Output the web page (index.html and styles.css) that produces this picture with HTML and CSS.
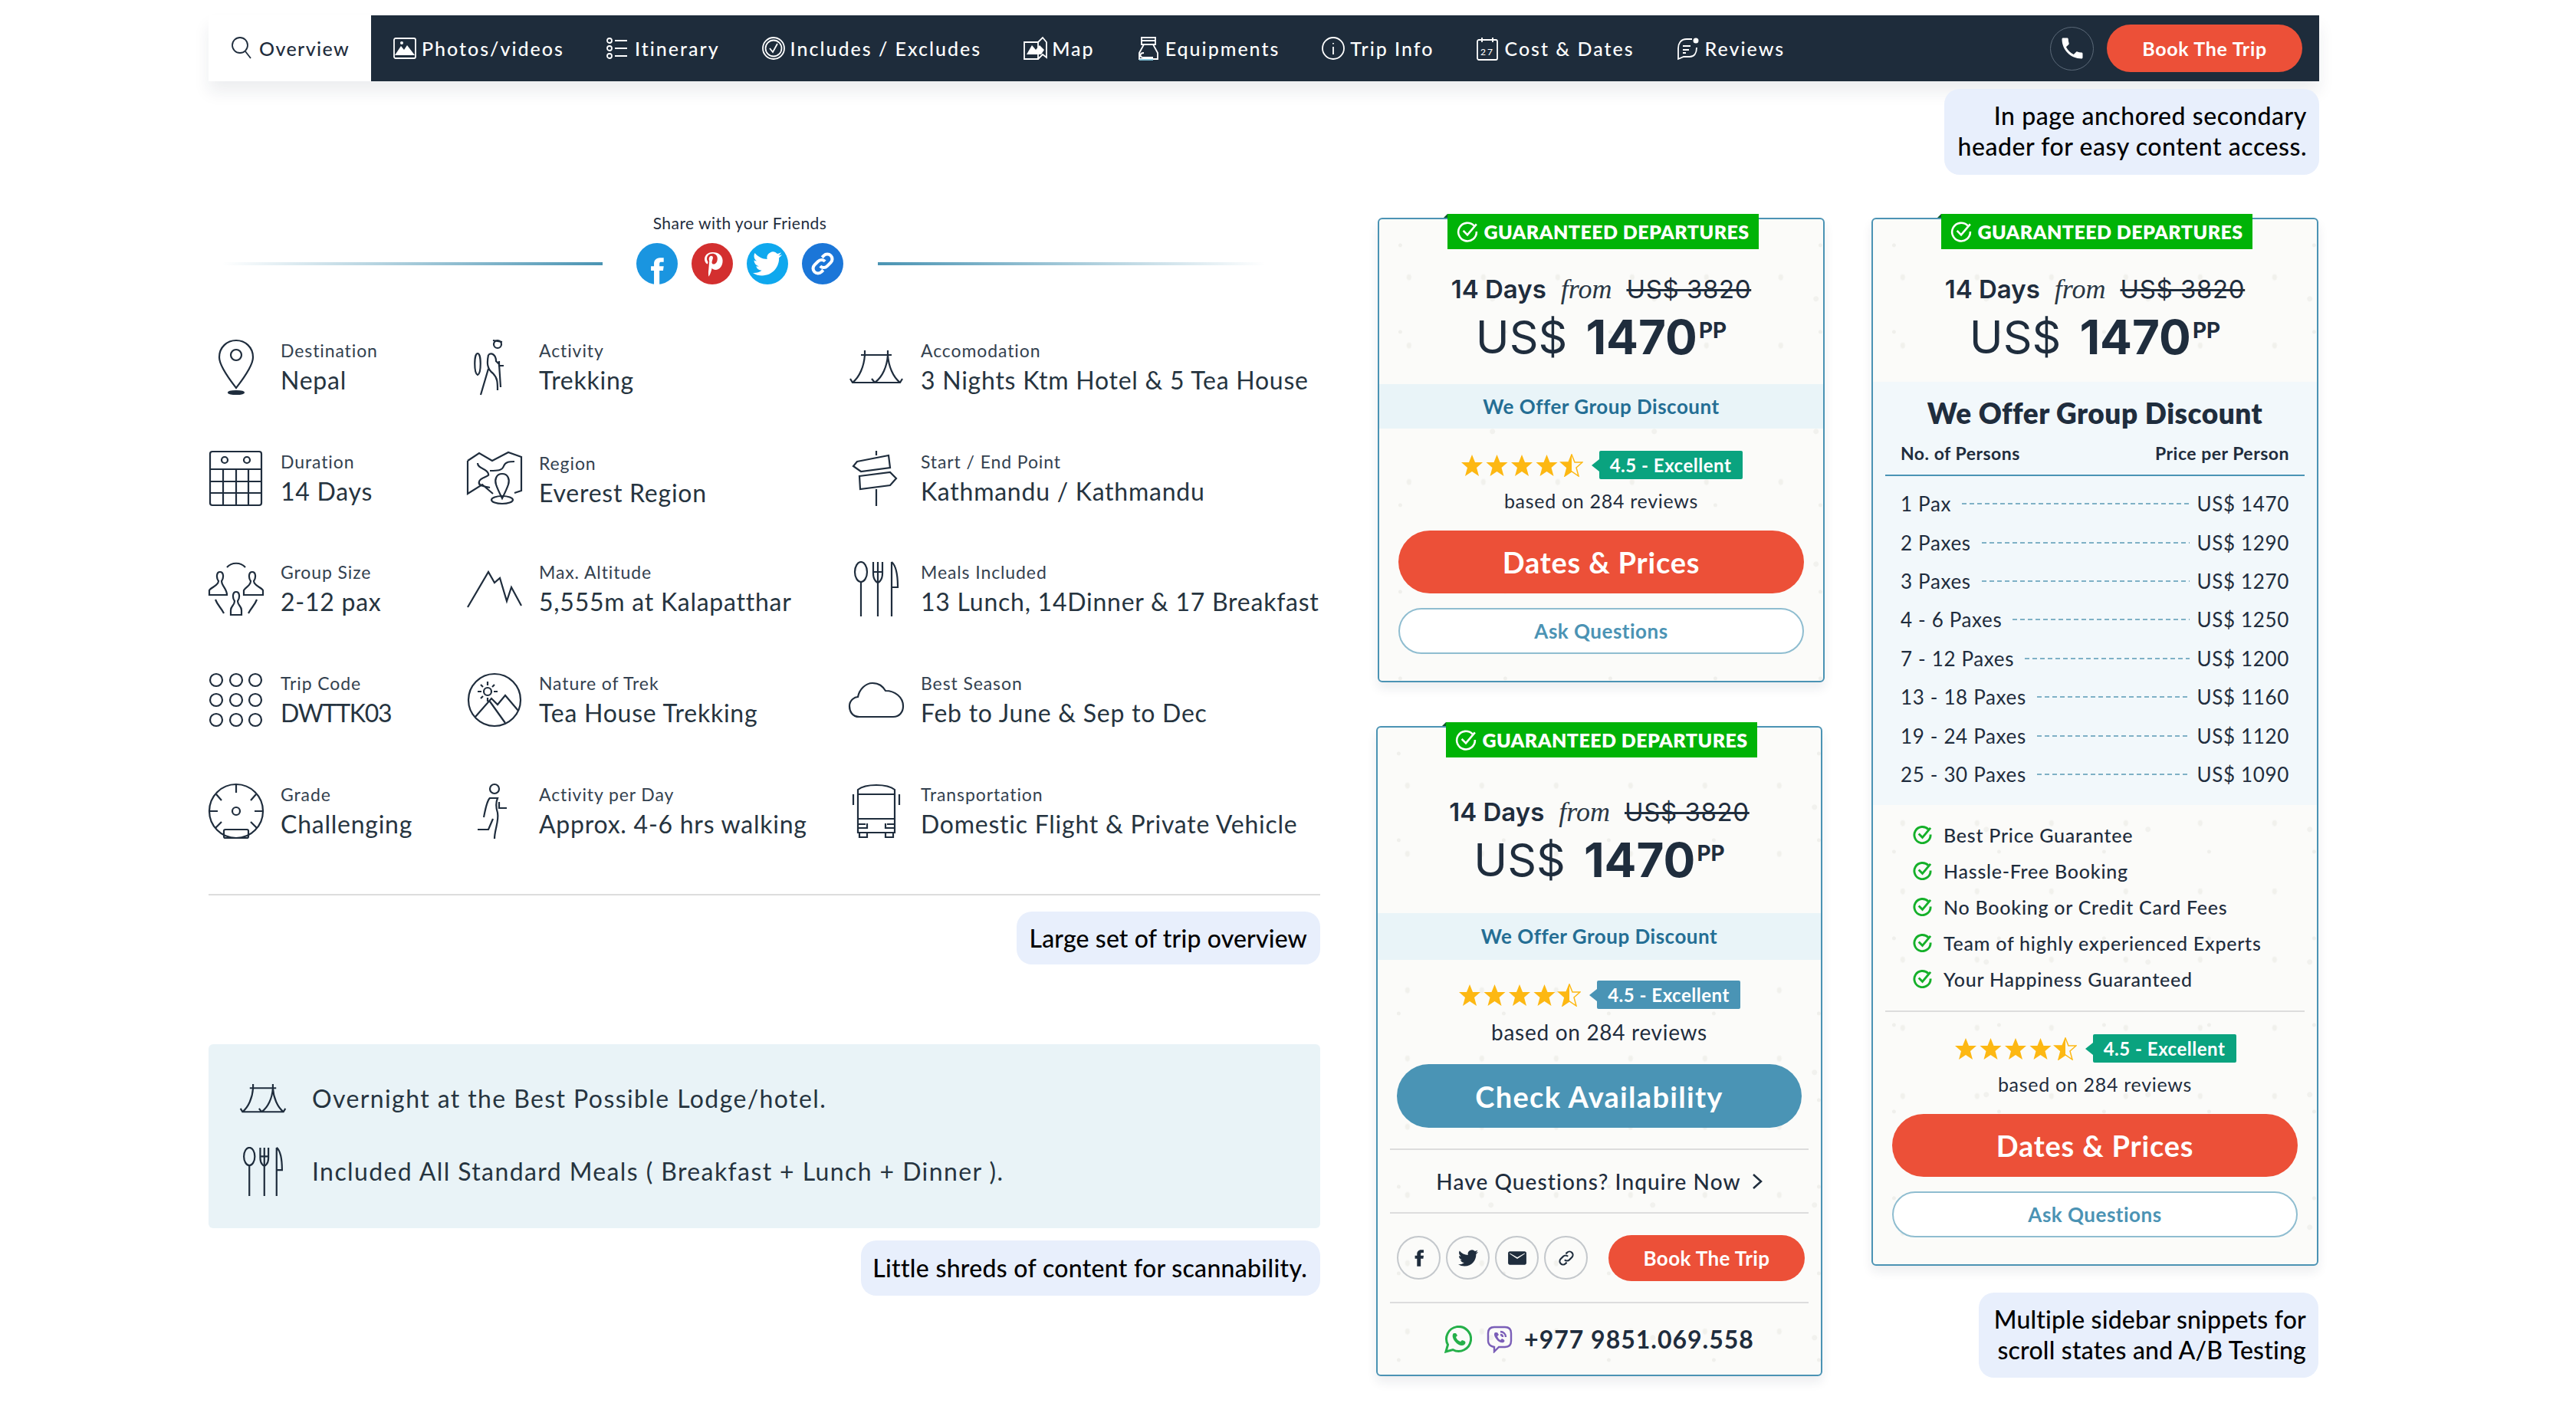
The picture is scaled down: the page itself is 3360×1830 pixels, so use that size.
FILE: index.html
```html
<!DOCTYPE html>
<html lang="en">
<head>
<meta charset="utf-8">
<title>Trip overview</title>
<link rel="stylesheet" href="styles.css">
</head>
<body>
<svg class="sprite" aria-hidden="true">
  <symbol id="tent" viewBox="0 0 72 46"><path d="M16 7H56M21 1V9M51 1V9M21 7C20 22 14 36 5 43M51 7C50 22 44 36 34 43M51 7C52 22 58 36 67 43M2 38 5 43H67L70 38M30 38 34 43"/></symbol>
  <symbol id="meal" viewBox="0 0 60 72"><ellipse cx="10" cy="14" rx="8" ry="13"/><path d="M10 27V72M26 1V16C26 26 32 28 32 28S38 26 38 16V1M32 1V72M26 14H38M50 1C56 6 58 20 58 34H50M50 1V72"/></symbol>
  <symbol id="chk" viewBox="0 0 26 26"><path d="M21 6A11 11 0 1 0 24 13"/><path d="M8 12 13 17 24 4"/></symbol>
  <symbol id="stars" viewBox="0 0 160 30"><g class="star"><path d="M15 1 19 11 29 11 21 18 24 29 15 23 6 29 9 18 1 11 11 11Z"/><path transform="translate(32.5 0)" d="M15 1 19 11 29 11 21 18 24 29 15 23 6 29 9 18 1 11 11 11Z"/><path transform="translate(65 0)" d="M15 1 19 11 29 11 21 18 24 29 15 23 6 29 9 18 1 11 11 11Z"/><path transform="translate(97.5 0)" d="M15 1 19 11 29 11 21 18 24 29 15 23 6 29 9 18 1 11 11 11Z"/><path transform="translate(130 0)" d="M15 1 19 11 29 11 21 18 24 29 15 23 6 29 9 18 1 11 11 11Z" fill="none" stroke="#fdb813" stroke-width="1.5"/><path transform="translate(130 0)" d="M15 1V23L6 29 9 18 1 11 11 11Z"/></g></symbol>
</svg>

<div class="page">
  <nav class="nav">
    <a class="tab tab-on"><svg class="ni" viewBox="0 0 32 32"><circle cx="13" cy="12" r="10"/><path d="M20 20 27 29"/></svg>Overview</a>
    <div class="bar">
      <div class="links">
        <a class="tab"><svg class="ni" viewBox="0 0 32 32"><rect x="2" y="3" width="28" height="26" rx="2"/><path d="M3 25 11 13 15 18 19 12 29 25Z" class="fw"/><circle cx="12" cy="9" r="2" class="fw"/></svg>Photos/videos</a>
        <a class="tab"><svg class="ni" viewBox="0 0 32 32"><circle cx="5" cy="6" r="3"/><circle cx="5" cy="16" r="3"/><circle cx="5" cy="26" r="3"/><path d="M12 6H28M12 16H28M12 26H28"/></svg>Itinerary</a>
        <a class="tab"><svg class="ni" viewBox="0 0 32 32"><circle cx="16" cy="16" r="14"/><circle cx="16" cy="16" r="10.5"/><path d="M11 16 15 21 21 10"/></svg>Includes / Excludes</a>
        <a class="tab"><svg class="ni" viewBox="0 0 32 32"><path d="M2 8H20V30H2ZM20 8 26 2 31 8V28L26 24 20 30"/><path d="M5 24 12 12 17 18 22 12 28 18 24 24Z" class="fw"/></svg>Map</a>
        <a class="tab"><svg class="ni" viewBox="0 0 32 32"><path d="M7 2H25V11H7ZM7 6H25M10 11 4 22V30H28V22L22 11M10 22C4 22 4 28 10 28H22"/><path d="M4 31H22" class="blue"/></svg>Equipments</a>
        <a class="tab"><svg class="ni" viewBox="0 0 32 32"><circle cx="16" cy="16" r="14"/><path d="M16 14V24M16 9V10.5"/></svg>Trip Info</a>
        <a class="tab"><svg class="ni" viewBox="0 0 32 32"><rect x="3" y="5" width="26" height="26" rx="2"/><path d="M9 2V8M23 2V8"/><text x="16" y="25" class="nt">27</text></svg>Cost &amp; Dates</a>
        <a class="tab"><svg class="ni" viewBox="0 0 32 32"><path d="M21 4H14C6 4 3 10 3 16V30L10 27H18C24 27 27 22 27 15"/><path d="M9 13H19M9 18H17M9 22H13"/><circle cx="26" cy="6" r="3.5" class="fw"/></svg>Reviews</a>
      </div>
      <span class="phone"><svg class="ph" viewBox="0 0 24 24"><path d="M6.6 10.8c1.4 2.8 3.8 5.1 6.6 6.6l2.2-2.2c.3-.3.7-.4 1-.2 1.1.4 2.3.6 3.6.6.6 0 1 .4 1 1V20c0 .6-.4 1-1 1C10.6 21 3 13.4 3 4c0-.6.4-1 1-1h3.5c.6 0 1 .4 1 1 0 1.3.2 2.5.6 3.6.1.3 0 .7-.2 1L6.6 10.8z"/></svg></span>
      <a class="nav-book">Book The Trip</a>
    </div>
  </nav>

  <div class="top-note"><p class="note note-top">In page anchored secondary<br>header for easy content access.</p></div>

  <div class="content">
    <section class="left">
      <p class="share-label">Share with your Friends</p>
      <div class="share-row">
        <span class="line line-l"></span>
        <div class="socials">
          <span class="soc fb"><svg viewBox="0 0 24 24"><path d="M14 9V7c0-1 .6-1.4 1.3-1.4H17.500V2H14.500C11 2 9.500 4.400 9.500 6.800V9H7v3.700h2.500V24H14V12.700h3l.5-3.700z"/></svg></span>
          <span class="soc pi"><svg viewBox="0 0 24 24"><path d="M12.300 2.500C8 2.500 5.700 5.300 5.700 8.300c0 1.500.8 3.300 2 3.800.4.200.5 0 .6-.3l.2-.9c.1-.2 0-.4-.1-.6-.5-.6-.8-1.400-.8-2.200 0-2.300 1.700-4.400 4.500-4.400 2.500 0 4.200 1.600 4.200 4 0 2.700-1.300 4.600-3.100 4.600-1 0-1.700-.8-1.500-1.800.3-1.200.9-2.600.9-3.500 0-.8-.4-1.500-1.400-1.500-1.100 0-1.900 1.100-1.900 2.600 0 1 .3 1.600.3 1.600L9 17c-.3 1.400-.2 3.400 0 5.500.6-.5 1.500-2.200 2-4l.8-2.900c.4.800 1.600 1.400 2.800 1.400 3.600 0 6-3.300 6-7.600 0-3.800-3.200-6.900-8.300-6.900z"/></svg></span>
          <span class="soc tw"><svg viewBox="0 0 24 24"><path d="M23.953 4.570a10 10 0 01-2.825.775 4.958 4.958 0 002.163-2.723c-.951.555-2.005.959-3.127 1.184a4.920 4.920 0 00-8.384 4.482C7.690 8.095 4.067 6.130 1.640 3.162a4.822 4.822 0 00-.666 2.475c0 1.710.870 3.213 2.188 4.096a4.904 4.904 0 01-2.228-.616v.060a4.923 4.923 0 003.946 4.827 4.996 4.996 0 01-2.212.085 4.936 4.936 0 004.604 3.417 9.867 9.867 0 01-6.102 2.105c-.390 0-.779-.023-1.170-.067a13.995 13.995 0 007.557 2.209c9.053 0 13.998-7.496 13.998-13.985 0-.210 0-.420-.015-.630A9.935 9.935 0 0024 4.590z"/></svg></span>
          <span class="soc ln"><svg viewBox="0 0 24 24"><path class="cl" d="M10 14a4 4 0 0 0 5.700 0l3-3a4 4 0 0 0-5.700-5.700l-1.500 1.500"/><path class="cl cb" d="M14 10a4 4 0 0 0-5.700 0l-3 3a4 4 0 0 0 5.700 5.700l1.500-1.500"/></svg></span>
        </div>
        <span class="line line-r"></span>
      </div>

      <div class="facts">
        <div class="fact">
          <svg class="fi" viewBox="0 0 72 72"><path d="M36 1C24 1 14 10 14 23 14 35 29 54 36 63 43 54 58 35 58 23 58 10 48 1 36 1Z"/><circle cx="36" cy="20" r="7"/><ellipse cx="36" cy="69" rx="10" ry="2" class="fd"/></svg>
          <div><p class="lab">Destination</p><p class="val">Nepal</p></div>
        </div>
        <div class="fact">
          <svg class="fi" viewBox="0 0 72 72"><circle cx="40" cy="6" r="5"/><path d="M34 1 46 3M14 18C9 18 9 44 14 46 19 44 19 18 14 18ZM28 20C32 16 38 20 38 28L42 32 44 62M42 28V34H48M28 20C26 30 26 38 34 44 40 50 40 56 40 66M28 38 18 72"/></svg>
          <div><p class="lab">Activity</p><p class="val">Trekking</p></div>
        </div>
        <div class="fact">
          <svg class="fi" viewBox="0 0 72 72"><use href="#tent" x="0" y="13" width="72" height="46"/></svg>
          <div><p class="lab">Accomodation</p><p class="val">3 Nights Ktm Hotel &amp; 5 Tea House</p></div>
        </div>

        <div class="fact">
          <svg class="fi" viewBox="0 0 72 72"><rect x="2" y="1" width="67" height="70" rx="3"/><path d="M2 24H69M2 40H69M2 55H69M19 24V71M36 24V71M52 24V71"/><circle cx="21" cy="12" r="4"/><circle cx="50" cy="12" r="4"/></svg>
          <div><p class="lab">Duration</p><p class="val">14 Days</p></div>
        </div>
        <div class="fact fact-low">
          <svg class="fi" viewBox="0 0 72 72"><path d="M1 13 16 3 33 13 54 2 71 8V52L62 55M1 13V56L20 44 34 56M14 16C14 24 26 22 28 30 30 34 18 34 16 40 14 46 22 46 30 48M30 26C40 26 46 26 48 20 50 14 56 14 62 14"/><path d="M46 30C38 30 36 38 38 44 40 50 44 58 46 62 48 58 52 50 54 44 56 38 54 30 46 30Z"/><ellipse cx="46" cy="64" rx="14" ry="5"/></svg>
          <div><p class="lab">Region</p><p class="val">Everest Region</p></div>
        </div>
        <div class="fact">
          <svg class="fi" viewBox="0 0 72 72"><path d="M36 0V6M11 14 52 6 54 22 16 27 6 20ZM14 33 54 28 62 36 54 45 15 50ZM36 50V72"/></svg>
          <div><p class="lab">Start / End Point</p><p class="val">Kathmandu / Kathmandu</p></div>
        </div>

        <div class="fact">
          <svg class="fi" viewBox="0 0 72 72"><path d="M15 14C10 14 10 22 13 26 13 32 3 34 1 38V44H24C24 36 17 32 17 26 20 22 20 14 15 14ZM57 14C52 14 52 22 55 26 55 32 48 34 46 38V44H71V38C69 34 59 32 59 26 62 22 62 14 57 14ZM36 40C31 40 31 48 34 52 34 58 29 58 29 64V70H43V64C43 58 38 58 38 52 41 48 41 40 36 40ZM24 8C30 1 42 1 48 8M9 50C12 58 16 60 20 68M63 50C60 58 56 60 52 68"/></svg>
          <div><p class="lab">Group Size</p><p class="val">2-12 pax</p></div>
        </div>
        <div class="fact">
          <svg class="fi" viewBox="0 0 72 72"><path d="M1 60 28 14 36 28 43 22 52 52 58 34 71 58"/></svg>
          <div><p class="lab">Max. Altitude</p><p class="val">5,555m at Kalapatthar</p></div>
        </div>
        <div class="fact">
          <svg class="fi" viewBox="0 0 72 72"><use href="#meal" x="6" y="0" width="60" height="72"/></svg>
          <div><p class="lab">Meals Included</p><p class="val">13 Lunch, 14Dinner &amp; 17 Breakfast</p></div>
        </div>

        <div class="fact">
          <svg class="fi" viewBox="0 0 72 72"><g><circle cx="10" cy="10" r="8"/><circle cx="36" cy="10" r="8"/><circle cx="61" cy="10" r="8"/><circle cx="10" cy="36" r="8"/><circle cx="36" cy="36" r="8"/><circle cx="61" cy="36" r="8"/><circle cx="10" cy="62" r="8"/><circle cx="36" cy="62" r="8"/><circle cx="61" cy="62" r="8"/></g></svg>
          <div><p class="lab">Trip Code</p><p class="val val-tight">DWTTK03</p></div>
        </div>
        <div class="fact">
          <svg class="fi" viewBox="0 0 72 72"><circle cx="36" cy="36" r="34"/><circle cx="27" cy="25" r="5"/><path d="M27 12V17M27 33V38M14 25H19M35 25H40M18 16 21 19M36 16 33 19M18 34 21 31M11 58 32 34 40 42 50 30 67 50M30 38 50 66"/></svg>
          <div><p class="lab">Nature of Trek</p><p class="val">Tea House Trekking</p></div>
        </div>
        <div class="fact">
          <svg class="fi" viewBox="0 0 72 72"><path d="M14 58C4 58 1 50 1 44 1 36 8 32 12 32 14 22 22 14 31 14 40 14 44 18 48 24 60 24 71 32 71 44 71 52 66 58 58 58Z"/></svg>
          <div><p class="lab">Best Season</p><p class="val">Feb to June &amp; Sep to Dec</p></div>
        </div>

        <div class="fact">
          <svg class="fi" viewBox="0 0 72 72"><circle cx="36" cy="36" r="35"/><circle cx="36" cy="36" r="5"/><path d="M36 1V12M1 36H12M60 36H71M10 14 17 22M62 14 55 22M9 58 17 50M63 58 55 50"/><rect x="20" y="60" width="32" height="11" rx="2"/></svg>
          <div><p class="lab">Grade</p><p class="val">Challenging</p></div>
        </div>
        <div class="fact">
          <svg class="fi" viewBox="0 0 72 72"><circle cx="36" cy="7" r="6"/><path d="M22 44C24 34 26 22 30 19H40C38 24 38 32 40 38 42 50 36 60 36 72M42 24V32H52M34 46 28 60H14"/></svg>
          <div><p class="lab">Activity per Day</p><p class="val">Approx. 4-6 hrs walking</p></div>
        </div>
        <div class="fact">
          <svg class="fi" viewBox="0 0 72 72"><path d="M12 8C22 0 50 0 60 8V64H12ZM12 14H60M12 46H60M12 53H22M50 53H60M12 58H24V52M48 52V58H60M14 64V70H24V64M48 64V70H58V64M6 14V28M66 14V28"/></svg>
          <div><p class="lab">Transportation</p><p class="val">Domestic Flight &amp; Private Vehicle</p></div>
        </div>
      </div>

      <hr class="rule">
      <div class="note-row"><p class="note note-large">Large set of trip overview</p></div>

      <div class="shreds">
        <div class="shred"><svg class="si" viewBox="0 0 72 46"><use href="#tent"/></svg><span>Overnight at the Best Possible Lodge/hotel.</span></div>
        <div class="shred"><svg class="si si-meal" viewBox="0 0 60 72"><use href="#meal"/></svg><span>Included All Standard Meals ( Breakfast + Lunch + Dinner ).</span></div>
      </div>
      <div class="note-row note-row-b"><p class="note note-shreds">Little shreds of content for scannability.</p></div>
    </section>

    <section class="side side-a">
      <article class="card card-a">
        <div class="ribbon"><svg class="rc" viewBox="0 0 26 26"><use href="#chk"/></svg>GUARANTEED DEPARTURES</div>
        <div class="days"><b>14 Days</b><i>from</i><s>US$ 3820</s></div>
        <div class="price"><span>US$</span><b>1470</b><sup>PP</sup></div>
        <p class="band">We Offer Group Discount</p>
        <div class="rating"><svg class="stars"><use href="#stars"/></svg><span class="score">4.5 - Excellent</span></div>
        <p class="based">based on 284 reviews</p>
        <a class="btn btn-red">Dates &amp; Prices</a>
        <a class="btn btn-ask">Ask Questions</a>
      </article>

      <article class="card card-b">
        <div class="ribbon"><svg class="rc" viewBox="0 0 26 26"><use href="#chk"/></svg>GUARANTEED DEPARTURES</div>
        <div class="days"><b>14 Days</b><i>from</i><s>US$ 3820</s></div>
        <div class="price"><span>US$</span><b>1470</b><sup>PP</sup></div>
        <p class="band">We Offer Group Discount</p>
        <div class="rating"><svg class="stars"><use href="#stars"/></svg><span class="score score-blue">4.5 - Excellent</span></div>
        <p class="based">based on 284 reviews</p>
        <a class="btn btn-blue">Check Availability</a>
        <div class="inquire">Have Questions? Inquire Now<svg class="chev" viewBox="0 0 14 22"><path d="M2 2 12 11 2 20"/></svg></div>
        <div class="actions">
          <span class="circ"><svg viewBox="0 0 24 24"><path d="M14 9V7c0-1 .6-1.400 1.300-1.400H17.500V2H14.500C11 2 9.500 4.400 9.500 6.800V9H7v3.700h2.500V22H14V12.700h3l.5-3.700z"/></svg></span>
          <span class="circ"><svg viewBox="0 0 24 24"><path d="M23.953 4.570a10 10 0 01-2.825.775 4.958 4.958 0 002.163-2.723c-.951.555-2.005.959-3.127 1.184a4.920 4.920 0 00-8.384 4.482C7.690 8.095 4.067 6.130 1.640 3.162a4.822 4.822 0 00-.666 2.475c0 1.710.870 3.213 2.188 4.096a4.904 4.904 0 01-2.228-.616v.060a4.923 4.923 0 003.946 4.827 4.996 4.996 0 01-2.212.085 4.936 4.936 0 004.604 3.417 9.867 9.867 0 01-6.102 2.105c-.390 0-.779-.023-1.170-.067a13.995 13.995 0 007.557 2.209c9.053 0 13.998-7.496 13.998-13.985 0-.210 0-.420-.015-.630A9.935 9.935 0 0024 4.590z"/></svg></span>
          <span class="circ"><svg viewBox="0 0 24 24"><path d="M3 4H21C22 4 23 5 23 6V18C23 19 22 20 21 20H3C2 20 1 19 1 18V6C1 5 2 4 3 4ZM3 7 12 13 21 7V6L12 11 3 6Z" fill-rule="evenodd"/></svg></span>
          <span class="circ"><svg viewBox="0 0 24 24"><path class="cl cd" d="M10 14a4 4 0 0 0 5.700 0l3-3a4 4 0 0 0-5.700-5.700l-1.500 1.500"/><path class="cl cd" d="M14 10a4 4 0 0 0-5.700 0l-3 3a4 4 0 0 0 5.700 5.700l1.500-1.500"/></svg></span>
          <a class="btn btn-book">Book The Trip</a>
        </div>
        <div class="contact">
          <svg class="wa" viewBox="0 0 36 36"><path d="M2 34 4.500 25A16 16 0 1 1 11 31.500Z"/><path class="wp" d="M12 10C10 12 10 16 14 21 18 26 23 27 26 25 28 23 28 21 26 20L23 19 21 21C18 20 16 18 15 15L17 13 15 10Z"/></svg>
          <svg class="vb" viewBox="0 0 34 36"><path d="M10 2H24C29 2 32 5 32 10V20C32 25 29 28 24 28H16L10 34V28C5 27 2 25 2 20V10C2 5 5 2 10 2Z"/><path class="vp" d="M11 9C9 11 10 14 13 18 16 22 20 23 22 22 24 21 24 19 22 18L20 17 18 19C16 18 15 16 14 14L16 12 14 9Z"/><path d="M18 8C22 8 25 11 25 15M18 12C20 12 21 13 21 15"/></svg>
          <span>+977 9851.069.558</span>
        </div>
      </article>
    </section>

    <section class="side">
      <article class="card card-c">
        <div class="ribbon"><svg class="rc" viewBox="0 0 26 26"><use href="#chk"/></svg>GUARANTEED DEPARTURES</div>
        <div class="days"><b>14 Days</b><i>from</i><s>US$ 3820</s></div>
        <div class="price"><span>US$</span><b>1470</b><sup>PP</sup></div>
        <div class="group">
          <h3>We Offer Group Discount</h3>
          <div class="ghead"><span>No. of Persons</span><span>Price per Person</span></div>
          <ul class="rates">
            <li><span>1 Pax</span><em></em><span>US$ 1470</span></li>
            <li><span>2 Paxes</span><em></em><span>US$ 1290</span></li>
            <li><span>3 Paxes</span><em></em><span>US$ 1270</span></li>
            <li><span>4 - 6 Paxes</span><em></em><span>US$ 1250</span></li>
            <li><span>7 - 12 Paxes</span><em></em><span>US$ 1200</span></li>
            <li><span>13 - 18 Paxes</span><em></em><span>US$ 1160</span></li>
            <li><span>19 - 24 Paxes</span><em></em><span>US$ 1120</span></li>
            <li><span>25 - 30 Paxes</span><em></em><span>US$ 1090</span></li>
          </ul>
        </div>
        <ul class="perks">
          <li><svg class="pc" viewBox="0 0 26 26"><use href="#chk"/></svg>Best Price Guarantee</li>
          <li><svg class="pc" viewBox="0 0 26 26"><use href="#chk"/></svg>Hassle-Free Booking</li>
          <li><svg class="pc" viewBox="0 0 26 26"><use href="#chk"/></svg>No Booking or Credit Card Fees</li>
          <li><svg class="pc" viewBox="0 0 26 26"><use href="#chk"/></svg>Team of highly experienced Experts</li>
          <li><svg class="pc" viewBox="0 0 26 26"><use href="#chk"/></svg>Your Happiness Guaranteed</li>
        </ul>
        <div class="rating"><svg class="stars"><use href="#stars"/></svg><span class="score">4.5 - Excellent</span></div>
        <p class="based">based on 284 reviews</p>
        <a class="btn btn-red">Dates &amp; Prices</a>
        <a class="btn btn-ask">Ask Questions</a>
      </article>
      <div class="note-row note-row-c"><p class="note note-side">Multiple sidebar snippets for<br>scroll states and A/B Testing</p></div>
    </section>
  </div>
</div>
</body>
</html>
```

FILE: styles.css
```css
* { box-sizing: border-box; }
html, body { margin: 0; padding: 0; background: #fff; }
body { font-family: "Lato", "Liberation Sans", sans-serif; color: #1f2d3d; }
p, h3, ul { margin: 0; padding: 0; }
ul { list-style: none; }
.sprite { position: absolute; width: 0; height: 0; }

.page { width: 3360px; height: 1830px; padding: 20px 335px 0 272px; overflow: hidden; }

/* nav */
.nav { display: flex; height: 86px; box-shadow: 0 14px 20px rgba(30,44,59,.08); }
.tab { display: flex; align-items: center; gap: 6px; font-size: 25px; font-weight: 500; letter-spacing: 2px; color: #fff; white-space: nowrap; }
.tab-on { width: 212px; padding-left: 28px; color: #1f2d3d; background: #fff; letter-spacing: 1.4px; }
.bar { flex: 1; display: flex; align-items: center; background: #1e2c3b; padding: 0 22px 0 28px; }
.links { flex: 1; display: flex; align-items: center; gap: 54px; }
.ni { width: 32px; height: 34px; fill: none; stroke: #fff; stroke-width: 1.8; flex: none; }
.tab-on .ni { stroke: #1f2d3d; }
.ni .fw { fill: #fff; stroke: none; }
.ni .blue { stroke: #7fc4dc; }
.nt { font-size: 12px; text-anchor: middle; fill: #fff; stroke: none; }
.phone { width: 57px; height: 57px; border: 1.5px solid #5b6978; border-radius: 50%; display: flex; align-items: center; justify-content: center; margin-right: 17px; }
.ph { width: 36px; height: 36px; fill: #fff; }
.nav-book { width: 255px; height: 62px; border-radius: 31px; background: #ec5038; color: #fff; font-size: 25px; font-weight: 700; letter-spacing: .7px; display: flex; align-items: center; justify-content: center; }

/* annotations */
.note { background: #e8effc; color: #000; font-size: 32px; font-weight: 500; text-align: right; border-radius: 20px; letter-spacing: .55px; }
.top-note { display: flex; justify-content: flex-end; margin-top: 10px; }
.note-top { width: 489px; height: 112px; padding: 15px 16px 0 0; line-height: 40px; }
.note-row { display: flex; justify-content: flex-end; margin-top: 21px; }
.note-large { width: 396px; height: 69px; line-height: 69px; padding-right: 17px; letter-spacing: .15px; }
.note-row-b { margin-top: 16px; }
.note-shreds { width: 599px; height: 72px; line-height: 72px; padding-right: 17px; letter-spacing: .3px; }
.note-row-c { margin-top: 35px; }
.note-side { width: 443px; height: 111px; padding: 15px 16px 0 0; line-height: 40px; letter-spacing: .2px; }

/* layout */
.content { display: flex; margin-top: 50px; align-items: flex-start; }
.left { width: 1450px; flex: none; }
.side { width: 583px; flex: none; margin-left: 61px; padding-top: 6px; }
.side-a { margin-left: 75px; }

/* share */
.share-label { width: 1386px; text-align: center; font-size: 21px; line-height: 26px; color: #1f2d3d; letter-spacing: .45px; }
.share-row { display: flex; align-items: center; width: 1360px; margin: 13px 0 0 18px; }
.line { height: 4px; }
.line-l { width: 496px; background: linear-gradient(90deg, rgba(74,148,179,0), #4a94b3); }
.line-r { width: 505px; background: linear-gradient(90deg, #4a94b3, rgba(74,148,179,0)); }
.socials { display: flex; gap: 18px; margin: 0 45px 0 44px; width: 270px; flex: none; }
.soc { width: 54px; height: 54px; border-radius: 50%; display: flex; align-items: center; justify-content: center; flex: none; }
.soc svg { width: 38px; height: 38px; fill: #fff; }
.fb { background: #1a95e0; align-items: flex-end; }
.pi { background: #d32f2f; }
.tw { background: #0fa8ee; }
.ln { background: #1b76d8; }
.cl { fill: none; stroke: #fff; stroke-width: 2.6; }
.cb { stroke: #fff; }
.cd { stroke: #1f2d3d; stroke-width: 2; }

/* facts */
.facts { display: grid; grid-template-columns: 337px 498px 1fr; row-gap: 72.7px; margin-top: 72px; }
.fact { display: flex; align-items: center; gap: 22px; height: 72px; }
.fi { width: 72px; height: 72px; flex: none; fill: none; stroke: #1f2d3d; stroke-width: 2.2; overflow: visible; }
.fi .fd { fill: #1f2d3d; }
.lab { font-size: 23px; line-height: 32px; letter-spacing: .9px; color: #33414f; }
.val { font-size: 32px; line-height: 42px; letter-spacing: .75px; margin-top: 2px; color: #26343f; white-space: nowrap; }
.val-tight { letter-spacing: -1.3px; }
.fact-low > div { margin-top: 4px; }

.rule { border: 0; height: 2px; background: #ddd; margin: 72px 0 0; }

/* shreds */
.shreds { height: 240px; margin-top: 104px; background: #e9f3f7; border-radius: 6px; padding: 41px 0 0 40px; }
.shred { display: flex; align-items: center; gap: 33px; font-size: 32px; letter-spacing: 1.4px; color: #26343f; height: 60px; }
.shred + .shred { margin-top: 32px; padding-top: 6px; }
.si { width: 62px; height: 40px; fill: none; stroke: #1f2d3d; stroke-width: 2.5; flex: none; overflow: visible; }
.si-meal { width: 62px; height: 64px; }

/* cards */
.card { position: relative; width: 583px; border: 2px solid #4b93b4; border-radius: 6px; padding: 71px 0 0; box-shadow: 0 8px 14px rgba(30,44,59,.08); background-color: #fbfbf9; background-image: radial-gradient(circle at 20% 30%, rgba(220,220,212,.35) 0 2px, transparent 3px), radial-gradient(circle at 70% 60%, rgba(225,225,218,.35) 0 3px, transparent 4px), radial-gradient(ellipse at 40% 85%, rgba(225,225,218,.4) 0 2px, transparent 4px); background-size: 137px 113px, 211px 173px, 97px 89px; }
.card-a { height: 606px; }
.card-b { width: 582px; height: 848px; margin: 57px 0 0 -2px; padding-top: 90px; }
.card-c { height: 1367px; }
.ribbon { position: absolute; top: -7px; left: 89px; width: 406px; height: 46px; display: flex; align-items: center; justify-content: center; gap: 7px; background: #00b307; color: #fff; font-size: 25px; font-weight: 800; letter-spacing: .45px; white-space: nowrap; }
.ribbon::before { content: ""; position: absolute; left: -5px; top: 0; border-bottom: 5px solid #0c5a2a; border-left: 5px solid transparent; }
.rc { width: 28px; height: 28px; fill: none; stroke: #fff; stroke-width: 2.4; flex: none; }
.days { display: flex; justify-content: center; align-items: center; gap: 19px; height: 40px; font-family: "Inter", "Liberation Sans", sans-serif; font-size: 33px; white-space: nowrap; }
.days b { font-weight: 600; }
.days i { font-family: "Liberation Serif", serif; font-size: 36px; color: #2a3744; }
.days s { font-weight: 400; letter-spacing: .6px; text-decoration-thickness: 3px; }
.price { display: flex; justify-content: center; align-items: center; height: 70px; margin-top: 7px; font-family: "Inter", "Liberation Sans", sans-serif; font-size: 62px; white-space: nowrap; }
.price span { font-size: 59px; font-weight: 400; margin-right: 24px; }
.price b { font-weight: 700; }
.price sup { font-size: 28px; font-weight: 700; line-height: 1; align-self: flex-start; margin: 13px 0 0 2px; }
.band { height: 58px; line-height: 58px; margin-top: 27px; text-align: center; background: #e9f4f8; color: #246e94; font-size: 26px; font-weight: 700; letter-spacing: .5px; }
.card-b .band { height: 61px; line-height: 61px; margin-top: 35px; }
.rating { display: flex; justify-content: center; align-items: center; gap: 21px; margin-top: 29px; height: 37px; }
.card-b .rating { margin-top: 27px; }
.stars { width: 160px; height: 30px; flex: none; }
.star { fill: #fdb813; }
.score { position: relative; width: 187px; height: 37px; line-height: 37px; text-align: center; background: #0aa37f; color: #fff; font-size: 24px; font-weight: 700; letter-spacing: .5px; border-radius: 2px; white-space: nowrap; }
.score::before { content: ""; position: absolute; left: -10px; top: 11px; border-right: 10px solid #0aa37f; border-top: 8px solid transparent; border-bottom: 8px solid transparent; }
.score-blue { background: #4a94b5; }
.score-blue::before { border-right-color: #4a94b5; }
.based { margin-top: 13px; line-height: 30px; text-align: center; font-size: 25px; letter-spacing: .7px; }
.card-b .based { margin-top: 15px; font-size: 28px; }
.btn { display: flex; align-items: center; justify-content: center; margin: 0 25px; border-radius: 42px; font-weight: 700; white-space: nowrap; }
.btn-red, .btn-blue { height: 82px; margin-top: 24px; font-size: 38px; color: #fff; letter-spacing: .8px; }
.btn-red { background: #ec5038; }
.btn-blue { background: #4a94b5; height: 83px; margin-top: 27px; letter-spacing: 1.3px; }
.btn-ask { height: 60px; margin-top: 19px; background: #fff; border: 2px solid #8fbdd0; color: #4b93b4; font-size: 26px; letter-spacing: .5px; }
.inquire { display: flex; align-items: center; justify-content: center; gap: 14px; height: 85px; margin: 27px 16px 0; border-top: 2px solid #ddd; border-bottom: 2px solid #ddd; font-size: 28px; font-weight: 500; letter-spacing: 1.1px; }
.chev { width: 14px; height: 22px; fill: none; stroke: #1f2d3d; stroke-width: 2.5; }
.actions { display: flex; align-items: center; gap: 7px; height: 117px; margin: 0 16px; padding-left: 9px; border-bottom: 2px solid #ddd; }
.circ { width: 57px; height: 57px; border: 2px solid #c4c8cc; border-radius: 50%; display: flex; align-items: center; justify-content: center; flex: none; }
.circ svg { width: 26px; height: 26px; fill: #1f2d3d; }
.btn-book { width: 256px; height: 60px; margin: 0 0 0 20px; background: #ec5038; color: #fff; font-size: 26px; letter-spacing: .4px; }
.contact { display: flex; align-items: center; justify-content: center; height: 93px; font-size: 32px; font-weight: 700; letter-spacing: 1px; white-space: nowrap; }
.wa { width: 36px; height: 36px; fill: none; stroke: #25b04a; stroke-width: 3; margin-right: 19px; }
.wp { fill: #25b04a; stroke: none; }
.vb { width: 34px; height: 36px; fill: none; stroke: #7b5fb8; stroke-width: 2.4; margin-right: 15px; }
.vp { fill: #7b5fb8; stroke: none; }

/* group */
.group { height: 552px; margin-top: 24px; background: #f2f8fb; padding-top: 21px; }
.group h3 { text-align: center; font-size: 37px; line-height: 40px; font-weight: 800; letter-spacing: .5px; }
.ghead { display: flex; justify-content: space-between; margin: 14px 16px 0; padding: 0 20px; height: 48px; line-height: 36px; border-bottom: 2px solid #4a94b5; font-size: 23px; font-weight: 700; letter-spacing: .5px; }
.rates { margin: 11px 36px 0; }
.rates li { display: flex; align-items: center; height: 50.4px; font-size: 26px; letter-spacing: .65px; white-space: nowrap; }
.rates em { flex: 1; height: 2px; margin: 0 10px 0 14px; background: repeating-linear-gradient(90deg, #7fb1c6 0 6px, transparent 6px 10px); }
.perks { margin: 15px 16px 0; padding: 0 36px 18px; border-bottom: 2px solid #ddd; }
.perks li { display: flex; align-items: center; gap: 15px; height: 47px; font-size: 25px; font-weight: 500; letter-spacing: .75px; white-space: nowrap; }
.pc { width: 25px; height: 25px; fill: none; stroke: #15b02a; stroke-width: 3; flex: none; }
```
